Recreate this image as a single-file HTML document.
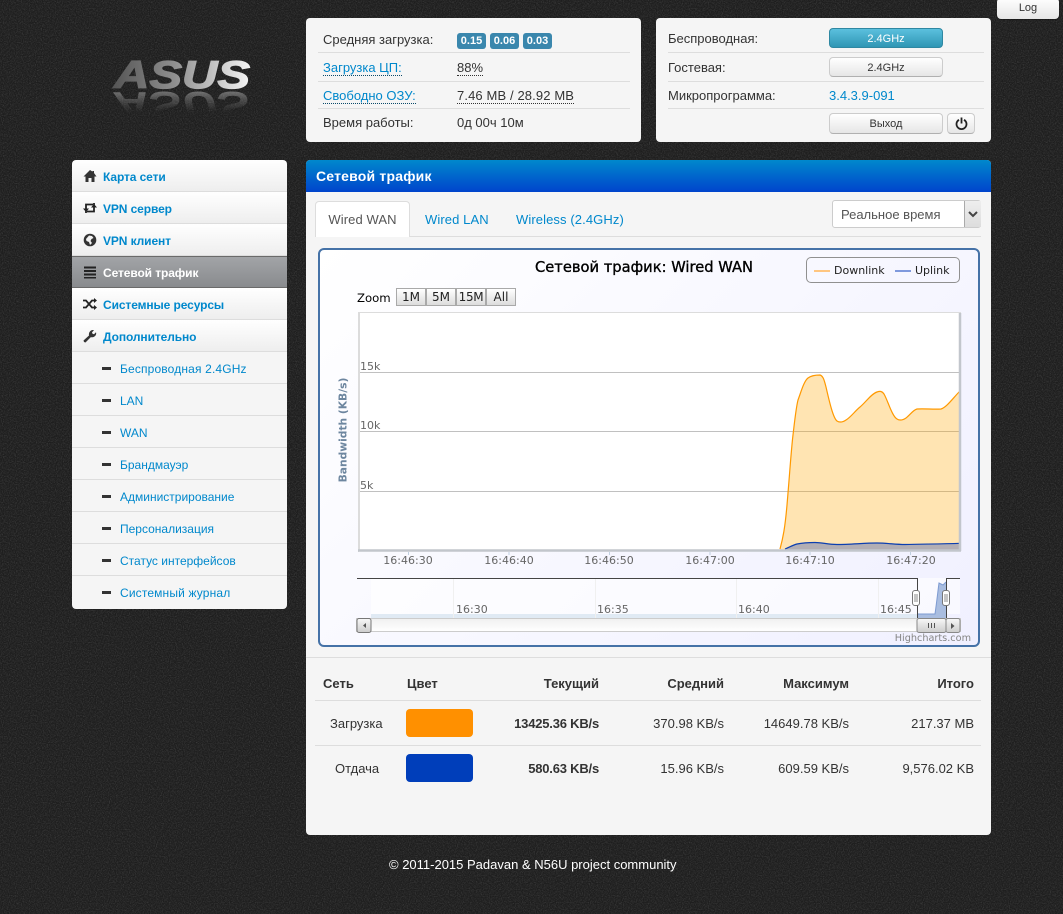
<!DOCTYPE html>
<html lang="ru"><head><meta charset="utf-8"><title>Сетевой трафик</title>
<style>
html,body{margin:0;padding:0}
body{width:1063px;height:914px;overflow:hidden;position:relative;background-color:#222;font-family:"Liberation Sans",Arial,sans-serif;font-size:13px;color:#333}
.a{position:absolute;white-space:nowrap}
.p{position:absolute;background:#f5f5f5;border-radius:4px}
.l{position:absolute;height:1px;background:#ddd}
.lnk{color:#0088cc}
.dot{border-bottom:1px dotted #0a4a6a;line-height:15px;display:inline-block}
.dot2{border-bottom:1px dotted #333;line-height:15px;display:inline-block}
.badge{position:absolute;top:33px;height:16px;line-height:16px;background:#3a87ad;color:#fff;font-weight:bold;font-size:11px;text-align:center;border-radius:3px}
.btn{position:absolute;text-align:center;font-size:11px;border:1px solid #ccc;border-bottom-color:#b0b0b0;border-radius:4px;background:linear-gradient(#fff,#e6e6e6);box-sizing:border-box;color:#333}
.m{position:absolute;left:72px;width:215px;height:32px;box-sizing:border-box;border-bottom:1px solid #ddd;background:linear-gradient(#fff,#eee);font-weight:bold;font-size:12px;line-height:34px;color:#0088cc;letter-spacing:-.1px}
.m span{position:absolute;left:31px}
.m svg{position:absolute;left:11px;top:9px}
.s{position:absolute;left:72px;width:215px;height:32px;box-sizing:border-box;border-bottom:1px solid #ddd;background:#f5f5f5;font-size:12px;line-height:34px;color:#0088cc}
.s span{position:absolute;left:48px}
.s i{position:absolute;left:30px;top:15px;width:9px;height:3px;background:#333}
.td{position:absolute;text-align:right;white-space:nowrap;font-size:13px}
.th{font-weight:bold;font-size:13px}
.b{font-weight:bold;letter-spacing:-.2px}
.dj{font-family:"DejaVu Sans",sans-serif}
.zb{position:absolute;top:288px;height:18px;width:30px;box-sizing:border-box;border:1px solid #a9a9a9;background:linear-gradient(#fff,#dcdcdc);font:12px/16px "DejaVu Sans",sans-serif;text-align:center;color:#222}
.tick{position:absolute;top:554px;font:11px/13px "DejaVu Sans",sans-serif;color:#666;white-space:nowrap;transform:translateX(-50%)}
</style></head><body>

<svg class="a" style="left:0;top:0" width="1063" height="914"><defs><filter id="nz" x="0" y="0" width="100%" height="100%"><feTurbulence type="fractalNoise" baseFrequency=".85" numOctaves="2" seed="4"/><feColorMatrix type="matrix" values="0 0 0 0 .5  0 0 0 0 .5  0 0 0 0 .5  .5 .5 0 0 -.42"/></filter></defs><rect width="1063" height="914" fill="#1e1e1e"/><rect width="1063" height="914" filter="url(#nz)" opacity=".55"/></svg>

<svg class="a" style="left:105px;top:50px" width="155" height="62" viewBox="0 0 155 62">
<defs><linearGradient id="lg" x1="0" y1="0" x2="1" y2="0"><stop offset="0" stop-color="#555"/><stop offset=".45" stop-color="#8f8f8f"/><stop offset="1" stop-color="#f4f4f4"/></linearGradient>
<linearGradient id="rg" gradientUnits="userSpaceOnUse" x1="0" y1="38" x2="0" y2="18"><stop offset="0" stop-color="#aaa" stop-opacity=".55"/><stop offset="1" stop-color="#888" stop-opacity="0"/></linearGradient></defs>
<g font-family="Liberation Sans" font-weight="bold" font-style="italic" font-size="39">
<text x="9" y="38" textLength="136" lengthAdjust="spacingAndGlyphs" fill="url(#lg)" stroke="url(#lg)" stroke-width="1.200">ASUS</text>
<g transform="translate(0,80) scale(1,-1)"><text x="9" y="38" textLength="136" lengthAdjust="spacingAndGlyphs" fill="url(#rg)">ASUS</text></g>
</g>
</svg>

<div class="btn" style="left:997px;top:-2px;width:62px;height:21px;line-height:21px;font-size:11px;border:0;box-shadow:0 1px 1px rgba(0,0,0,.3)">Log</div>

<div class="p" style="left:306px;top:18px;width:335px;height:124px"></div>
<div class="a" style="left:323px;top:32px">Средняя загрузка:</div>
<div class="badge" style="left:457px;width:29px">0.15</div>
<div class="badge" style="left:490px;width:29px">0.06</div>
<div class="badge" style="left:523px;width:29px">0.03</div>
<div class="l" style="left:318px;top:52px;width:312px"></div>
<div class="a lnk" style="left:323px;top:60px"><span class="dot">Загрузка ЦП:</span></div>
<div class="a" style="left:457px;top:60px"><span class="dot2">88%</span></div>
<div class="l" style="left:318px;top:81px;width:312px"></div>
<div class="a lnk" style="left:323px;top:88px"><span class="dot">Свободно ОЗУ:</span></div>
<div class="a" style="left:457px;top:88px"><span class="dot2" style="letter-spacing:.12px">7.46 MB / 28.92 MB</span></div>
<div class="l" style="left:318px;top:108px;width:312px"></div>
<div class="a" style="left:323px;top:115px">Время работы:</div>
<div class="a" style="left:457px;top:115px">0д 00ч 10м</div>

<div class="p" style="left:656px;top:18px;width:335px;height:124px"></div>
<div class="a" style="left:668px;top:31px">Беспроводная:</div>
<div class="btn" style="left:829px;top:28px;width:114px;height:20px;line-height:20px;background:linear-gradient(#5bc0de,#2f96b4);border-color:#2f88a2;color:#fff">2.4GHz</div>
<div class="l" style="left:668px;top:52px;width:316px"></div>
<div class="a" style="left:668px;top:60px">Гостевая:</div>
<div class="btn" style="left:829px;top:57px;width:114px;height:20px;line-height:20px">2.4GHz</div>
<div class="l" style="left:668px;top:81px;width:316px"></div>
<div class="a" style="left:668px;top:88px">Микропрограмма:</div>
<div class="a lnk" style="left:829px;top:88px">3.4.3.9-091</div>
<div class="l" style="left:668px;top:108px;width:316px"></div>
<div class="btn" style="left:829px;top:113px;width:114px;height:21px;line-height:20px">Выход</div>
<div class="btn" style="left:947px;top:113px;width:28px;height:21px"><svg style="position:absolute;left:7px;top:3px" width="13" height="14" viewBox="0 0 13 14"><path d="M4 2.800a5 5 0 1 0 5 0" fill="none" stroke="#222" stroke-width="1.800"/><path d="M6.500 0.500v6" stroke="#222" stroke-width="1.800"/></svg></div>

<div class="m" style="top:160px;border-radius:4px 4px 0 0"><svg width="14" height="14" viewBox="0 0 14 14"><path d="M7 1L.5 7.500h2V13h3V9h3v4h3V7.500h2L11 4V2H9.500v.6z" fill="#333"/></svg><span>Карта сети</span></div>
<div class="m" style="top:192px"><svg width="14" height="14" viewBox="0 0 14 14"><path d="M3 12V3.500h7M11 2v8.500H4" fill="none" stroke="#222" stroke-width="1.800"/><path d="M0 7.500l3 3.500 3-3.500zM8 6.500l3-3.500 3 3.500z" fill="#222"/></svg><span>VPN сервер</span></div>
<div class="m" style="top:224px"><svg width="14" height="14" viewBox="0 0 14 14"><circle cx="7" cy="7" r="6.300" fill="#333"/><path d="M6 2.500l3 .5 1.500 2-2 1-1 2 1.500 2-2 2-1-3-2.500-1-.5-2z" fill="#f2f2f2"/></svg><span>VPN клиент</span></div>
<div class="m" style="top:256px;background:linear-gradient(#a2a4a7,#898b8e);border-top:1px solid #6a6a6a;border-bottom:1px solid #6a6a6a;line-height:32px"><svg width="14" height="14" viewBox="0 0 14 14" style="top:8px"><path d="M1 1.500h12v2H1zM1 5h12v2H1zM1 8.500h12v2H1zM1 12h12v1.500H1z" fill="#222"/></svg><span style="color:#fff">Сетевой трафик</span></div>
<div class="m" style="top:288px"><svg width="14" height="14" viewBox="0 0 14 14"><path d="M0 3.500h3l6 7h2.500M0 10.500h3l6-7h2.500" fill="none" stroke="#222" stroke-width="1.800"/><path d="M11 1l3 2.500-3 2.500zM11 8l3 2.500-3 2.500z" fill="#222"/></svg><span>Системные ресурсы</span></div>
<div class="m" style="top:320px"><svg width="14" height="14" viewBox="0 0 14 14"><path d="M1 13l-.5-1.500L6 6.500C5.500 4 7 1 10 1l1 .2-2 2 .5 1.500 1.500.5 2-2 .2 1c0 3-3 4.500-5.500 4L2.500 13.500z" fill="#333"/></svg><span>Дополнительно</span></div>
<div class="s" style="top:352px"><i></i><span style="letter-spacing:.15px">Беспроводная 2.4GHz</span></div>
<div class="s" style="top:384px"><i></i><span>LAN</span></div>
<div class="s" style="top:416px"><i></i><span>WAN</span></div>
<div class="s" style="top:448px"><i></i><span>Брандмауэр</span></div>
<div class="s" style="top:480px"><i></i><span>Администрирование</span></div>
<div class="s" style="top:512px"><i></i><span>Персонализация</span></div>
<div class="s" style="top:544px"><i></i><span>Статус интерфейсов</span></div>
<div class="s" style="top:576px;height:33px;border-bottom:0;border-radius:0 0 4px 4px"><i></i><span style="letter-spacing:.15px">Системный журнал</span></div>

<div class="p" style="left:306px;top:160px;width:685px;height:675px"></div>
<div class="a" style="left:306px;top:160px;width:685px;height:32px;border-radius:4px 4px 0 0;background:linear-gradient(#0088cc,#0044cc)"></div>
<div class="a" style="left:316px;top:168px;color:#fff;font-weight:bold;font-size:14px;line-height:17px;letter-spacing:.2px">Сетевой трафик</div>

<div class="l" style="left:315px;top:236px;width:666px"></div>
<div class="a" style="left:315px;top:201px;width:95px;height:36px;box-sizing:border-box;background:#fff;border:1px solid #ddd;border-bottom:0;border-radius:4px 4px 0 0;text-align:center;line-height:36px;font-size:13px;letter-spacing:.1px;color:#555">Wired WAN</div>
<div class="a lnk" style="left:425px;top:211px;font-size:13px;line-height:17px;letter-spacing:.1px">Wired LAN</div>
<div class="a lnk" style="left:516px;top:211px;font-size:13px;line-height:17px;letter-spacing:.1px">Wireless (2.4GHz)</div>
<div class="a" style="left:832px;top:200px;width:149px;height:28px;box-sizing:border-box;border:1px solid #ccc;border-radius:3px;background:#fff;line-height:27px;padding-left:8px;color:#555">Реальное время</div>
<div class="a" style="left:964px;top:201px;width:16px;height:26px;background:linear-gradient(#eee,#ddd);border-left:1px solid #aaa"><svg style="position:absolute;left:3px;top:10px" width="10" height="7" viewBox="0 0 10 7"><path d="M1 1l4 4 4-4" fill="none" stroke="#444" stroke-width="2"/></svg></div>

<div class="a" style="left:318px;top:248px;width:662px;height:399px;box-sizing:border-box;border:2px solid #4572a7;border-radius:6px;background:linear-gradient(135deg,#fff,#f0f0ff)"></div>

<svg class="a" style="left:0;top:0;overflow:visible" width="1063" height="914">
<rect x="358" y="312" width="602" height="238" fill="#fff"/>
<path d="M358 372.500H960M358 431.500H960M358 491.500H960" stroke="#c0c0c0" stroke-width="1"/>
<path d="M780 549 C783 538 785 528 787 505 C790 470 791 452 793 435 C795 418 796 408 798 400 C801 392 804 381 808 378 C812 375 817 375 820 375 C823 376 824 379 826 387 C829 400 833 418 837 421 C840 423 843 422 846 420 C851 417 855 411 860 407 C866 402 871 394 877 392 C880 391 882 391 884 394 C888 401 892 416 897 419 C900 421 903 420 906 418 C910 415 913 410 917 409 C925 408.500 933 409.500 941 409 C947 407 953 398 960 391 L960 550 L780 550 Z" fill="#ffa500" fill-opacity=".3"/>
<path d="M780 549 C783 538 785 528 787 505 C790 470 791 452 793 435 C795 418 796 408 798 400 C801 392 804 381 808 378 C812 375 817 375 820 375 C823 376 824 379 826 387 C829 400 833 418 837 421 C840 423 843 422 846 420 C851 417 855 411 860 407 C866 402 871 394 877 392 C880 391 882 391 884 394 C888 401 892 416 897 419 C900 421 903 420 906 418 C910 415 913 410 917 409 C925 408.500 933 409.500 941 409 C947 407 953 398 960 391" fill="none" stroke="#ff9900" stroke-width="1.200"/>
<path d="M785 549 C790 547 793 545 797 544 C803 542.800 809 542.500 815 542.500 C822 542.500 828 544.500 837 544.500 C850 544.500 865 543 877 543 C887 543 895 544.500 905 544.500 C925 544 942 544 960 543.300 L960 550 L785 550 Z" fill="#0033bb" fill-opacity=".3"/>
<path d="M785 549 C790 547 793 545 797 544 C803 542.800 809 542.500 815 542.500 C822 542.500 828 544.500 837 544.500 C850 544.500 865 543 877 543 C887 543 895 544.500 905 544.500 C925 544 942 544 960 543.300" fill="none" stroke="#0d3fb0" stroke-width="1.200"/>
<path d="M358 312.500h603M358.500 312v240M359.500 312v238" stroke="#dcdcdc" stroke-width="1" fill="none"/>
<path d="M960 313v238M358 550.500h603" stroke="#c2c6cc" stroke-width="2.500" fill="none"/>
<path d="M408.500 552v3M509 552v3M609.500 552v3M710 552v3M810 552v3M910.500 552v3" stroke="#c0d0e0"/>
<!-- navigator -->
<rect x="371" y="578" width="589" height="36" fill="#fff" fill-opacity=".6"/>
<rect x="371" y="614" width="546" height="4" fill="#e0eaf4"/>
<path d="M453.500 578v40M595.500 578v40M736.500 578v40M878.500 578v40" stroke="#f0f0f0"/>
<path d="M917 618V614H935C937 600 938 590 939 583L943 585L946 582V618Z" fill="#a9bde0"/>
<path d="M917 614H935C937 600 938 590 939 583L943 585L946 582" fill="none" stroke="#7d9bd2" stroke-width="1"/>
<path d="M357 578.500H917.500V618M946.500 618V578.500H960" fill="none" stroke="#444" stroke-width="1"/>
<defs><linearGradient id="sb" x1="0" y1="0" x2="0" y2="1"><stop offset="0" stop-color="#f0f0f0"/><stop offset="1" stop-color="#fff"/></linearGradient>
<linearGradient id="bb" x1="0" y1="0" x2="0" y2="1"><stop offset="0" stop-color="#f8f8f8"/><stop offset="1" stop-color="#ccc"/></linearGradient></defs>
<rect x="356.500" y="618.500" width="604" height="13" fill="url(#sb)" stroke="#ccc"/>
<rect x="357" y="618.500" width="14" height="14" rx="2" fill="url(#bb)" stroke="#777"/>
<path d="M366 623v5l-3-2.500z" fill="#555"/>
<rect x="917" y="618.500" width="29" height="14" rx="2" fill="url(#bb)" stroke="#888"/>
<path d="M928.500 623v5M931.500 623v5M934.500 623v5" stroke="#555"/>
<rect x="946" y="618.500" width="14" height="14" rx="2" fill="url(#bb)" stroke="#888"/>
<path d="M951 623v6l3.500-3z" fill="#555"/>
<rect x="912.500" y="590.500" width="7" height="15" rx="2.500" fill="#fff" stroke="#777"/>
<path d="M915 594v8M917 594v8" stroke="#888"/>
<rect x="942.500" y="590.500" width="7" height="15" rx="2.500" fill="#fff" stroke="#777"/>
<path d="M945 594v8M947 594v8" stroke="#888"/>
</svg>

<div class="a dj" style="left:535px;top:259px;font-size:14.700px;line-height:17px;color:#000;-webkit-text-stroke:.35px #000">Сетевой трафик: Wired WAN</div>
<div class="a" style="left:806px;top:257px;width:154px;height:26px;box-sizing:border-box;border:1px solid #909090;border-radius:5px"></div>
<div class="a" style="left:814px;top:270px;width:16px;height:2px;background:#ffc680"></div>
<div class="a dj" style="left:834px;top:264px;font-size:11px;line-height:14px;color:#222">Downlink</div>
<div class="a" style="left:895px;top:270px;width:16px;height:2px;background:#7f99dd"></div>
<div class="a dj" style="left:915px;top:264px;font-size:11px;line-height:14px;color:#222">Uplink</div>

<div class="a dj" style="left:357px;top:291px;font-size:11.700px;line-height:14px;color:#000">Zoom</div>
<div class="zb" style="left:396px">1M</div><div class="zb" style="left:426px">5M</div><div class="zb" style="left:456px;letter-spacing:-.3px">15M</div><div class="zb" style="left:486px">All</div>

<div class="a dj" style="left:360px;top:360px;font-size:11px;line-height:13px;color:#666">15k</div>
<div class="a dj" style="left:360px;top:419px;font-size:11px;line-height:13px;color:#666">10k</div>
<div class="a dj" style="left:360px;top:479px;font-size:11px;line-height:13px;color:#666">5k</div>
<div class="a dj" style="left:343px;top:430px;transform:translate(-50%,-50%) rotate(-90deg);font-size:10.700px;font-weight:bold;line-height:13px;color:#6d869f">Bandwidth (KB/s)</div>

<div class="tick" style="left:408px">16:46:30</div><div class="tick" style="left:509px">16:46:40</div><div class="tick" style="left:609px">16:46:50</div><div class="tick" style="left:710px">16:47:00</div><div class="tick" style="left:810px">16:47:10</div><div class="tick" style="left:911px">16:47:20</div>
<div class="a dj" style="left:456px;top:603px;font-size:11px;line-height:13px;color:#666">16:30</div>
<div class="a dj" style="left:597px;top:603px;font-size:11px;line-height:13px;color:#666">16:35</div>
<div class="a dj" style="left:738px;top:603px;font-size:11px;line-height:13px;color:#666">16:40</div>
<div class="a dj" style="left:880px;top:603px;font-size:11px;line-height:13px;color:#666">16:45</div>
<div class="a dj" style="right:92px;top:633px;font-size:9.700px;line-height:12px;color:#858585">Highcharts.com</div>

<div class="l" style="left:306px;top:657px;width:685px"></div>
<div class="l" style="left:315px;top:700px;width:666px"></div>
<div class="l" style="left:315px;top:745px;width:666px"></div>
<div class="td th" style="left:323px;top:676px">Сеть</div>
<div class="td th" style="left:407px;top:676px">Цвет</div>
<div class="td th" style="right:464px;top:676px">Текущий</div>
<div class="td th" style="right:339px;top:676px">Средний</div>
<div class="td th" style="right:214px;top:676px">Максимум</div>
<div class="td th" style="right:89px;top:676px">Итого</div>

<div class="td" style="left:330px;top:716px">Загрузка</div>
<div class="a" style="left:406px;top:709px;width:67px;height:28px;border-radius:4px;background:#ff9000"></div>
<div class="td b" style="right:464px;top:716px">13425.36 KB/s</div>
<div class="td" style="right:339px;top:716px">370.98 KB/s</div>
<div class="td" style="right:214px;top:716px">14649.78 KB/s</div>
<div class="td" style="right:89px;top:716px">217.37 MB</div>

<div class="td" style="left:335px;top:761px">Отдача</div>
<div class="a" style="left:406px;top:754px;width:67px;height:28px;border-radius:4px;background:#003eba"></div>
<div class="td b" style="right:464px;top:761px">580.63 KB/s</div>
<div class="td" style="right:339px;top:761px">15.96 KB/s</div>
<div class="td" style="right:214px;top:761px">609.59 KB/s</div>
<div class="td" style="right:89px;top:761px">9,576.02 KB</div>

<div class="a" style="left:389px;top:857px;color:#fff;line-height:16px">© 2011-2015 Padavan &amp; N56U project community</div>
</body></html>
